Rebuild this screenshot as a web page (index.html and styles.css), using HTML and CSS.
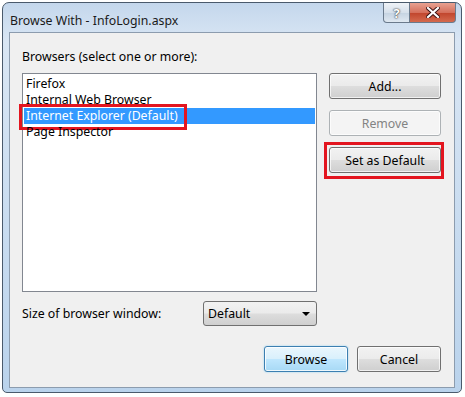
FILE: index.html
```html
<!DOCTYPE html>
<html lang="en">
<head>
  <meta charset="UTF-8">
  <meta name="viewport" content="width=device-width, initial-scale=1.0">
  <title>Browse With</title>
  <link rel="stylesheet" href="styles.css">
</head>
<body>
  <div class="window">
    <div class="titlebar">
      <span class="title">Browse With - InfoLogin.aspx</span>
      <div class="caption-btns">
        <span class="cap-btn help">?</span>
        <span class="cap-btn close">
          <svg width="14" height="11" viewBox="0 0 14 11">
            <path d="M2 1 L12 10 M12 1 L2 10" stroke="#3a1010" stroke-width="4" stroke-linecap="square"/>
            <path d="M2 1 L12 10 M12 1 L2 10" stroke="#fff" stroke-width="2.2" stroke-linecap="square"/>
          </svg>
        </span>
      </div>
    </div>

    <div class="client">
      <div class="label-row">Browsers (select one or more):</div>

      <div class="main-row">
        <ul class="listbox">
          <li>Firefox</li>
          <li>Internal Web Browser</li>
          <li class="selected">Internet Explorer (Default)<span class="mark mark-item"></span></li>
          <li>Page Inspector</li>
        </ul>
        <div class="side-btns">
          <button class="btn">Add...</button>
          <button class="btn" disabled>Remove</button>
          <div class="marked">
            <button class="btn">Set as Default</button>
            <span class="mark mark-btn"></span>
          </div>
        </div>
      </div>

      <div class="size-row">
        <span class="size-label">Size of browser window:</span>
        <div class="combo">
          <span>Default</span>
          <span class="arrow"></span>
        </div>
      </div>

      <div class="bottom-row">
        <button class="btn default">Browse</button>
        <button class="btn">Cancel</button>
      </div>
    </div>
  </div>
</body>
</html>
```

FILE: styles.css
```css
body {
  margin: 0;
  padding: 2px;
  background: #ffffff;
  font-family: "Noto Sans", "Segoe UI", sans-serif;
  font-size: 12.3px;
  color: #000;
}
.window {
  width: 458px;
  height: 389px;
  border: 1px solid #4a5a6c;
  border-radius: 7px 7px 5px 5px;
  background: linear-gradient(to bottom, #c4d7ec 0%, #d9e6f4 10%, #bad3ec 100%);
  display: flex;
  flex-direction: column;
}
.titlebar {
  height: 29px;
  display: flex;
  justify-content: space-between;
  align-items: flex-start;
  padding-left: 7px;
}
.title {
  margin-top: 9px;
  color: #1a1a1a;
}
.caption-btns {
  display: flex;
  margin-right: 5px;
}
.cap-btn {
  height: 19px;
  display: flex;
  align-items: center;
  justify-content: center;
  border: 1px solid #6a7a8c;
  border-top: none;
}
.help {
  width: 25px;
  border-radius: 0 0 0 4px;
  background: linear-gradient(to bottom, #eef2f7, #d6e0eb 50%, #c4d2e1 51%, #dfe8f1);
  color: #fff;
  font-weight: bold;
  font-size: 13px;
  text-shadow: 0 0 2px #333, 0 0 1px #333;
}
.close {
  width: 45px;
  border-left: none;
  border-radius: 0 0 4px 0;
  background: linear-gradient(to bottom, #e8a191, #d5705c 50%, #c0442c 51%, #d46a4e);
}
.client {
  flex: 1;
  margin: 0 6px 4px 6px;
  border: 1px solid #8c9cae;
  background: #f0f0f0;
  padding: 0 13px 0 12px;
}
.label-row {
  height: 40px;
  line-height: 16px;
  padding-top: 16px;
  box-sizing: border-box;
}
.main-row {
  display: flex;
}
.listbox {
  list-style: none;
  margin: 0;
  padding: 1px;
  width: 295px;
  height: 219px;
  box-sizing: border-box;
  border: 1px solid #828790;
  background: #fff;
}
.listbox li {
  height: 16px;
  line-height: 16px;
  padding-left: 2px;
  position: relative;
}
.listbox li:first-child {
  margin-top: 1px;
}
.listbox .selected {
  background: #3399ff;
  color: #fff;
}
.mark {
  position: absolute;
  border: 3px solid #e3151f;
}
.mark-item {
  left: -5px;
  top: -4px;
  width: 162px;
  height: 20px;
}
.side-btns {
  margin-left: 12px;
  width: 112px;
  display: flex;
  flex-direction: column;
  gap: 11px;
}
.marked {
  position: relative;
}
.mark-btn {
  left: -5px;
  top: -5px;
  width: 114px;
  height: 31px;
}
.btn {
  font-family: inherit;
  font-size: 12.3px;
  color: #000;
  height: 26px;
  width: 112px;
  border: 1px solid #707070;
  border-radius: 3px;
  background: linear-gradient(to bottom, #f2f2f2 0%, #ebebeb 48%, #dddddd 52%, #cfcfcf 100%);
  box-shadow: inset 0 0 0 1px rgba(255, 255, 255, 0.7);
  padding: 0;
}
.btn:disabled {
  border-color: #adb2b5;
  background: #f4f4f4;
  color: #838383;
}
.size-row {
  margin-top: 9px;
  height: 25px;
  display: flex;
  align-items: center;
}
.size-label {
  width: 181px;
}
.combo {
  width: 114px;
  height: 25px;
  box-sizing: border-box;
  border: 1px solid #707070;
  border-radius: 3px;
  background: linear-gradient(to bottom, #f2f2f2 0%, #ebebeb 48%, #dddddd 52%, #cfcfcf 100%);
  display: flex;
  align-items: center;
  justify-content: space-between;
  padding: 0 6px 0 4px;
}
.arrow {
  width: 0;
  height: 0;
  border-left: 4px solid transparent;
  border-right: 4px solid transparent;
  border-top: 4px solid #000;
}
.bottom-row {
  margin-top: 20px;
  display: flex;
  justify-content: flex-end;
  gap: 9px;
}
.bottom-row .btn {
  width: 84px;
}
.btn.default {
  border-color: #3c7fb1;
  background: linear-gradient(to bottom, #eaf6fd 0%, #d9f0fc 48%, #bee6fd 52%, #a7d9f5 100%);
  box-shadow: inset 0 0 0 1px rgba(255, 255, 255, 0.8), 0 0 2px #8cd0f3;
}
```
